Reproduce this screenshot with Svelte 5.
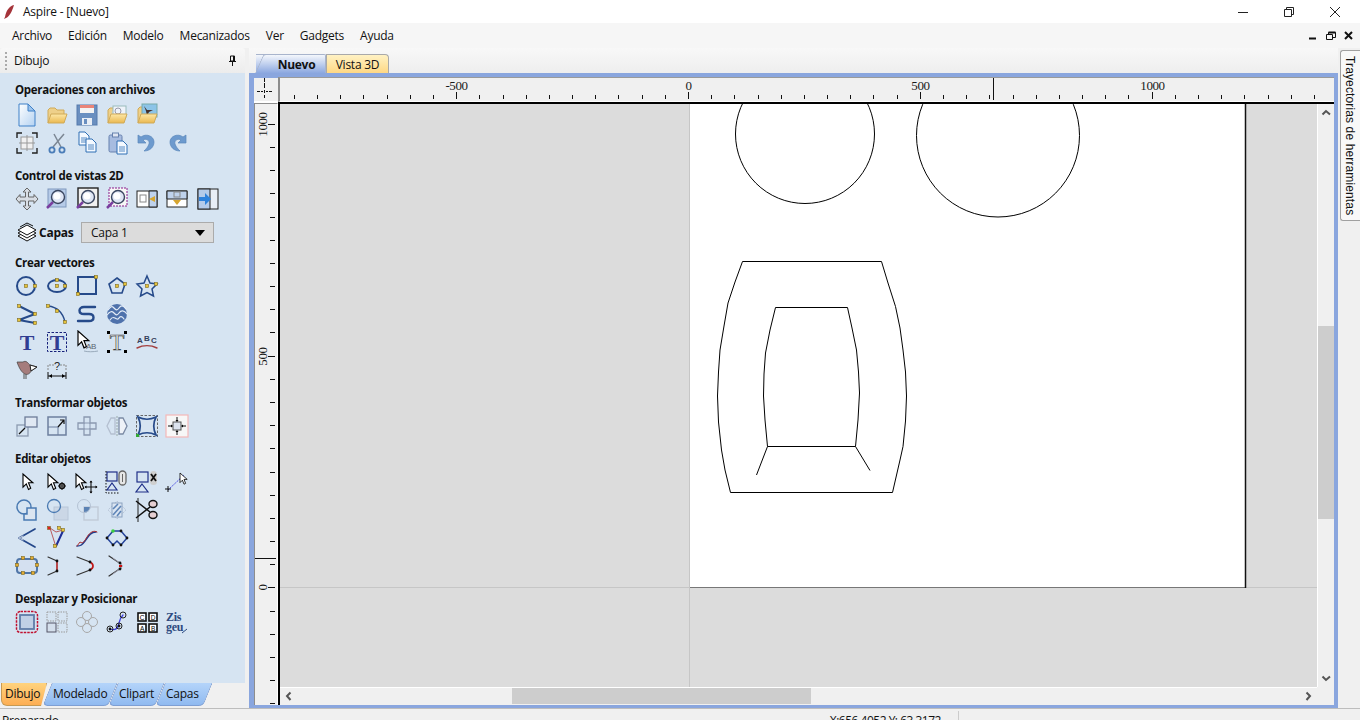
<script>
  const k = (x, y, c = '#e6c33c') => `<rect x="${x - 1.5}" y="${y - 1.5}" width="3" height="3" fill="${c}" stroke="#7d6a20" stroke-width=".6"/>`;
  const d = (x, y) => `<circle cx="${x}" cy="${y}" r="1.4" fill="#111"/>`;
  const blue = '#264a8a';
  const line = (p, c = blue, w = 2) => `<path d="${p}" fill="none" stroke="${c}" stroke-width="${w}" stroke-linejoin="round" stroke-linecap="round"/>`;
  const doc = (x, y, s = 1) => `<g transform="translate(${x} ${y}) scale(${s})"><path d="M0 0h6l4 4v9H0z" fill="#f4f9ff" stroke="#2f6fb4"/><path d="M2 6h6M2 8h6M2 10h6" stroke="#2f6fb4" stroke-width=".8"/></g>`;
  const folder = `<path d="M3 20V7l2-2h5l2 2h7v5" fill="#eed08a" stroke="#d0aa58"/><path d="M3 20l3-9h16l-3 9z" fill="url(#fg)" stroke="#d0aa58"/>`;
  const lens = (x = 13, y = 10, c = '#7a3fa0') => `<path d="M${x - 5} ${y + 5}L${x - 11} ${y + 11}" stroke="${c}" stroke-width="2.5"/><circle cx="${x}" cy="${y}" r="6.5" fill="#dfe6f5" stroke="#3a4660" stroke-width="1.4"/><circle cx="${x - 1}" cy="${y - 1}" r="3.5" fill="#fff"/>`;
  const cur = (x, y, s = 1) => `<path transform="translate(${x} ${y}) scale(${s})" d="M0 0v12l3-3 2 5 2-1-2-5h4z" fill="#fff" stroke="#000"/>`;

  const icons = {
    new: `<path d="M4 1h9l7 7v15H4z" fill="url(#dg)" stroke="#3f80c8"/><path d="M13 1v7h7z" fill="#9cc3ec" stroke="#3f80c8"/>`,
    open: folder,
    save: `<rect x="2" y="2" width="20" height="20" fill="#6a8fc0" stroke="#567aac"/><rect x="5" y="2" width="14" height="8" fill="#f3f3f3"/><rect x="5" y="2" width="14" height="3" fill="#ea8478"/><rect x="7" y="15" width="10" height="7" fill="#e9eef5"/><rect x="9" y="16" width="3" height="5" fill="#6a8fc0"/>`,
    openp: `<path d="M3 20V7l2-2h4" fill="#eed08a" stroke="#d0aa58"/><rect x="8" y="3" width="13" height="11" fill="#eef3fa" stroke="#9bb"/><circle cx="13" cy="8" r="3" fill="none" stroke="#99a"/><path d="M3 20l3-9h16l-3 9z" fill="url(#fg)" stroke="#d0aa58"/>`,
    opens: `<path d="M3 20V6l2-2h4" fill="#eed08a" stroke="#d0aa58"/><rect x="7" y="1" width="15" height="13" fill="#8cc4e8" stroke="#7aa"/><path d="M9 3l3 4h6l-4 2-2 4-1-5z" fill="#43302c"/><path d="M3 20l3-9h16l-3 9z" fill="url(#fg)" stroke="#d0aa58"/>`,
    fit: `<path d="M2 7V2h5M17 2h5v5M22 17v5h-5M7 22H2v-5" fill="none" stroke="#222" stroke-width="1.4"/><rect x="6" y="6" width="12" height="12" fill="#f1f1f1" stroke="#999"/><path d="M12 4v16M4 12h16" stroke="#999"/>`,
    cut: `<path d="M9 3l7 13M19 3L8 16" stroke="#7c8794" stroke-width="1.5"/><circle cx="7" cy="19" r="2.6" fill="none" stroke="#4b7db8" stroke-width="1.8"/><circle cx="17" cy="19" r="2.6" fill="none" stroke="#4b7db8" stroke-width="1.8"/>`,
    copy: doc(4, 1) + doc(11, 8),
    paste: `<rect x="4" y="4" width="13" height="17" rx="1.5" fill="#a7bce0" stroke="#6781ae"/><rect x="7.5" y="2" width="6" height="4" fill="#dfe6f2" stroke="#6781ae"/>` + doc(12, 10),
    undo: `<path d="M6 5v8h8l-3-3c4-2 7 1 6 4-1 3-3 5-5 7 6 0 10-4 10-9 0-6-8-9-13-5z" transform="translate(-3 -1)" fill="#6d9ace" stroke="#5a86ba" stroke-width=".7"/>`,
    redo: `<path d="M18 5v8h-8l3-3c-4-2-7 1-6 4 1 3 3 5 5 7-6 0-10-4-10-9 0-6 8-9 13-5z" transform="translate(3 -1)" fill="#6d9ace" stroke="#5a86ba" stroke-width=".7"/>`,
    move: `<path d="M12 1l4 4h-2.500v5H19V7.500l4 4.500-4 4.500V14h-5.500v5H16l-4 4-4-4h2.500v-5H5v2.500L1 12l4-4.500V10h5.500V5H8z" fill="#d8dde4" stroke="#666"/>`,
    z1: `<rect x="3" y="2" width="18" height="18" fill="#b6cbe8" stroke="#7f98bd"/>` + lens(),
    z2: `<rect x="3" y="1" width="20" height="19" fill="#f0f0f0" stroke="#222" stroke-width="1.4"/>` + lens(),
    z3: `<rect x="4" y="1" width="18" height="18" fill="#f7f7f7" stroke="#8a1a8a" stroke-dasharray="2 1"/>` + lens(),
    z4: `<rect x="2" y="4" width="20" height="16" fill="#fff" stroke="#222"/><path d="M14 4h8v16h-8z" fill="#bfd2ec" stroke="#222"/><rect x="5" y="8" width="6" height="7" fill="none" stroke="#888"/><path d="M14 12l6-3v6z" fill="#d6a530"/>`,
    z5: `<rect x="2" y="4" width="20" height="16" fill="#fff" stroke="#222"/><path d="M2 4h20v8H2z" fill="#bfd2ec" stroke="#222"/><rect x="9" y="5" width="6" height="5" fill="none" stroke="#888"/><path d="M8 13l4 5 4-5z" fill="#d6a530"/>`,
    z6: `<rect x="3" y="2" width="20" height="20" fill="#e8eef6" stroke="#222"/><rect x="3" y="2" width="12" height="20" fill="#b5cbea" stroke="#222"/><path d="M4 10h6V6l6 6-6 6v-4H4z" fill="#2f82dc"/>`,
    circ: `<circle cx="11" cy="12" r="9" fill="none" stroke="${blue}" stroke-width="2"/>` + k(11, 12) + k(20, 12),
    ell: `<ellipse cx="12" cy="12" rx="9" ry="6" fill="none" stroke="${blue}" stroke-width="2"/>` + k(12, 6) + k(12, 12) + k(20, 12),
    rect: `<rect x="3" y="3" width="18" height="17" fill="none" stroke="${blue}" stroke-width="2"/>` + k(3, 20) + k(21, 3),
    poly: `<path d="M12 4l8 6-3 9H7l-3-9z" fill="none" stroke="${blue}" stroke-width="1.6"/>` + k(12, 12) + k(20, 10),
    star: `<path d="M12 2l3 7 7 1-5 5 1.500 7-6.500-3.500L5.500 22 7 15l-5-5 7-1z" fill="none" stroke="${blue}" stroke-width="1.5"/>` + k(12, 12) + k(21, 10),
    pline: line('M4 4l16 8-16 6 16 3') + k(4, 4) + k(20, 12) + k(4, 18) + k(20, 21),
    arc: line('M3 4c9 1 15 7 17 16', blue, 1.4) + k(3, 4) + k(12, 9) + k(20, 20),
    s: line('M20 5H9c-6 0-6 7 0 7h5c6 0 6 7 0 7H3', blue, 2.4),
    wave: `<circle cx="12" cy="12" r="10" fill="#4f72ac"/>` + line('M3 8c3-4 4-4 6-2s3 3 5 0 4-3 7 1M2 13c3-4 5-4 7-2s3 3 5 0 5-3 8 1M5 18c2-3 3-3 5-2s3 2 4 0 3-2 5 1', '#e4edf8', 1.2),
    t1: `<text x="12" y="20" text-anchor="middle" font-family="Liberation Serif" font-weight="700" font-size="22" fill="#303c92">T</text>`,
    t2: `<rect x="2.500" y="2.500" width="19" height="19" fill="none" stroke="#16207a" stroke-dasharray="2.500 1.500"/><text x="12" y="20" text-anchor="middle" font-family="Liberation Serif" font-weight="700" font-size="22" fill="#303c92">T</text>`,
    t3: cur(3, 1, 1.2) + `<text x="11" y="19" font-family="Liberation Sans" font-size="8" fill="#5a6470">AB</text><path d="M9 21c4 1 9 1 14 0" stroke="#9ab" fill="none"/>`,
    t4: `<text x="12" y="20" text-anchor="middle" font-family="Liberation Serif" font-size="24" fill="#e8e8e8" stroke="#333" stroke-width=".6">T</text><rect x="2" y="1" width="3" height="3"/><rect x="19" y="1" width="3" height="3"/><rect x="2" y="20" width="3" height="3"/><rect x="19" y="20" width="3" height="3"/>`,
    t5: `<text x="2" y="13" font-family="Liberation Sans" font-weight="700" font-size="8" fill="#33405a">A</text><text x="9" y="11" font-family="Liberation Sans" font-weight="700" font-size="8" fill="#33405a">B</text><text x="16" y="13" font-family="Liberation Sans" font-weight="700" font-size="8" fill="#33405a">C</text>` + line('M2 18c6-3 14-3 20 0', '#a34040', 1.4),
    bird: `<path d="M2 4l6 0c3-2 5 1 7 3l7 2-6 4c-1 3-4 4-6 3C7 15 4 10 2 4z" fill="#a57c7c" stroke="#444" stroke-width=".7"/><path d="M15 7l7 2-6 4z" fill="#fff" stroke="#222"/><path d="M9 16v5M11 16v5" stroke="#555"/>`,
    dim: `<path d="M3 12V7h6M15 7h6v5" fill="none" stroke="#888" stroke-dasharray="2 1"/><text x="12" y="12" text-anchor="middle" font-family="Liberation Sans" font-size="11" fill="#222">?</text><path d="M3 14v7M21 14v7M3 18h18" stroke="#111"/><path d="M4 18l3-2v4zM20 18l-3-2v4z"/>`,
    tr1: `<rect x="2" y="11" width="11" height="11" fill="none" stroke="#8c9ab0" stroke-width="1.3"/><rect x="10" y="3" width="12" height="10" fill="#e0e8f3" stroke="#6d7c98" stroke-width="1.3"/><path d="M4 20l6-6" stroke="#111" stroke-width="1.2"/>`,
    tr2: `<rect x="3" y="3" width="18" height="18" fill="none" stroke="#6d7f9e" stroke-width="1.5"/><path d="M3 13h10v8" fill="none" stroke="#6d7f9e"/><path d="M13 13l6-7M15 6h4v4" stroke="#111" fill="none" stroke-width="1.2"/>`,
    tr3: `<path d="M9 3h6v6h6v6h-6v6H9v-6H3V9h6z" fill="none" stroke="#8a98b0" stroke-width="1.3"/><path d="M9 9h6v6H9z" fill="none" stroke="#8a98b0"/>`,
    tr4: `<path d="M10 4H6L2 12l4 8h4z" fill="none" stroke="#b4bfd0" stroke-width="1.3"/><path d="M14 4h4l4 8-4 8h-4z" fill="#eef2f8" stroke="#7b8aa4" stroke-width="1.3"/><path d="M12 2v20" stroke="#9aa" stroke-dasharray="2 1"/>`,
    tr5: `<rect x="1.500" y="1.500" width="21" height="21" fill="none" stroke="#666" stroke-dasharray="2.500 1.500"/><path d="M3 3c6 3 12 3 18 0-3 6-3 12 0 18-6-3-12-3-18 0 3-6 3-12 0-18z" fill="none" stroke="${blue}" stroke-width="1.7"/><rect x="1" y="20" width="3" height="3" fill="#3a3"/>`,
    tr6: `<rect x="1" y="1" width="22" height="22" fill="#f7f7f7" stroke="#f4b8b8" stroke-width="1.2"/><rect x="8" y="8" width="8" height="8" fill="#dce3ee" stroke="#555"/><path d="M12 3v4M12 21v-4M3 12h4M21 12h-4" stroke="#111"/><path d="M10.500 6h3L12 8zM10.500 18h3L12 16zM6 10.500v3L8 12zM18 10.500v3L16 12z"/>`,
    e1: cur(8, 4, 1.1),
    e2: cur(3, 4, 1.1) + `<circle cx="17" cy="16" r="2.500" fill="#fff" stroke="#111" stroke-width="1.5"/><path d="M17 12v8M13 16h8" stroke="#111"/>`,
    e3: cur(1, 4, 1.1) + `<path d="M16 11v12M10 17h12" stroke="#111" stroke-width="1.1"/><path d="M14.500 12.500h3L16 10.500zM14.500 21.500h3L16 23.500zM11.500 15.500v3L9.500 17zM20.500 15.500v3L22.500 17z"/>`,
    e4: `<rect x="2" y="2" width="10" height="9" fill="none" stroke="#1f2f88" stroke-width="1.2"/><path d="M7 13l5 7H2z" fill="none" stroke="#1f2f88" stroke-width="1.2"/><path d="M1 1v22h14" fill="none" stroke="#111" stroke-dasharray="1.500 1.500"/><rect x="14" y="1" width="7" height="14" rx="3.500" fill="#e6e6e6" stroke="#666" stroke-width="1.300"/><path d="M17.500 4v8" stroke="#666"/>`,
    e5: `<rect x="2" y="2" width="11" height="10" fill="none" stroke="#1f2f88" stroke-width="1.2"/><path d="M7 14l6 8H1z" fill="none" stroke="#1f2f88" stroke-width="1.2"/><rect x="15" y="1" width="7" height="14" rx="3.500" fill="#cfcfcf"/><path d="M16 4l5 7M21 4l-5 7" stroke="#111" stroke-width="1.800"/>`,
    e6: `<path d="M3 20L19 5" stroke="#3a3ae0" stroke-dasharray="1.500 1"/><path d="M3 16v6M0 19h6" stroke="#111"/>` + cur(15, 3, .8),
    b1: `<circle cx="9" cy="9" r="7" fill="none" stroke="#4a7ab2" stroke-width="1.500"/><path d="M9 16h3V10h9v12H9z" fill="#dbe5f1" stroke="#4a7ab2" stroke-width="1.500"/>`,
    b2: `<rect x="9" y="9" width="14" height="13" fill="#cbd7e6" stroke="#b8c6d8"/><circle cx="9" cy="8" r="6.500" fill="none" stroke="#4a7ab2" stroke-width="1.300"/>`,
    b3: `<rect x="9" y="9" width="14" height="13" fill="none" stroke="#c0cad8" stroke-width="1.400"/><path d="M9 9h6a6 6 0 0 1-6 6z" fill="#5b82b4"/><circle cx="9" cy="8" r="6.500" fill="none" stroke="#b4c2d4"/>`,
    b4: `<path d="M12 3l9 9-9 9-9-9z" fill="none" stroke="#b9c6d8" stroke-dasharray="2 1"/><rect x="7" y="5" width="10" height="14" fill="#dbe5f1" stroke="#8ba2c0"/><path d="M8 11l5-5M8 17l8-9M12 18l4-5" stroke="#5f86b8" stroke-width="1.600"/>`,
    b5: `<path d="M3 0v24" stroke="#222"/><ellipse cx="18" cy="6" rx="4" ry="3.500" fill="#e6cfd2" stroke="#111" stroke-width="1.400"/><ellipse cx="18" cy="17" rx="4" ry="3.500" fill="#e6cfd2" stroke="#111" stroke-width="1.400"/><path d="M1 3l14 11M1 20L15 9" stroke="#111" stroke-width="1.500"/>`,
    n1: line('M20 3L4 12l16 9', '#24478a', 1.7) + line('M8 10l-4 2 4 2', '#b8c4d8', 1.2),
    n2: line('M5 2l6 4 7-2-7 17L5 2', '#aa2020', .7) + line('M18 5l-7 15', '#1e2f98', 2) + k(4, 2, '#e02020') + k(14, 2) + k(18, 4) + k(10, 20),
    n3: line('M2 20c4 0 5-1 8-5s5-9 11-9', '#1f3c8c', 1.5) + line('M2 20l3-4c3 2 4 0 7-5s7-7 10-5', '#b03030', 1),
    n4: `<path d="M2 12L8 5H16L22 12L16 19L12 15L8 19z" fill="none" stroke="#24429a" stroke-width="1.500"/>` + d(2, 12) + d(16, 5) + d(22, 12) + d(16, 19) + d(8, 19) + `<circle cx="8" cy="5" r="1.800" fill="#3cd040"/>`,
    n5: `<rect x="2" y="5" width="20" height="14" rx="3" fill="#d4e0f0" stroke="#5076a8" stroke-width="2"/>` + k(8, 4, '#e4ac32') + k(17, 4, '#e4ac32') + k(22, 11, '#e4ac32') + k(18, 19, '#e4ac32') + k(8, 19, '#e4ac32') + k(2, 11, '#e4ac32'),
    n6: line('M3 3l9 4M3 21l9-4', '#333', 1.2) + line('M12 7v10', '#b02020', 1.6) + d(12, 7) + d(12, 17),
    n7: line('M2 3l13 5M2 21l13-5', '#333', 1.2) + line('M15 8c4 2 4 6 0 8', '#c01818', 1.7) + d(15, 8) + d(15, 16),
    n8: line('M4 2l12 8M4 22l12-8', '#333', 1.2) + line('M8 4l10 8-10 8', '#aab', .8) + d(15, 9) + d(15, 15) + `<rect x="14" y="11" width="3" height="2" fill="#d01010"/>`,
    p1: `<rect x="1.500" y="1.500" width="21" height="21" rx="4" fill="none" stroke="#c01030" stroke-width="1.500" stroke-dasharray="2.500 1"/><rect x="5" y="5" width="14" height="14" fill="#c0d0e6" stroke="#5f7ca8" stroke-width="1.800"/>`,
    p2: `<rect x="2" y="2" width="9" height="9" fill="none" stroke="#9a9a9a" stroke-dasharray="1.500 1"/><rect x="13" y="2" width="9" height="9" fill="none" stroke="#9a9a9a" stroke-dasharray="1.500 1"/><rect x="2" y="13" width="9" height="9" fill="#d4dfec" stroke="#556"/><rect x="13" y="13" width="9" height="9" fill="none" stroke="#9a9a9a" stroke-dasharray="1.500 1"/>`,
    p3: `<circle cx="12" cy="6" r="4.500" fill="none" stroke="#a8a8a8"/><circle cx="12" cy="18" r="4.500" fill="none" stroke="#a8a8a8"/><circle cx="6" cy="12" r="4.500" fill="none" stroke="#a8a8a8"/><circle cx="18" cy="12" r="4.500" fill="none" stroke="#a8a8a8"/>`,
    p4: line('M5 19c6 2 8-1 9-6s2-6 4-8', '#3c3ce0', 1.3) + `<circle cx="5" cy="19" r="3" fill="none" stroke="#222"/><circle cx="14" cy="16" r="3" fill="none" stroke="#222"/><circle cx="18" cy="5" r="3" fill="none" stroke="#222"/>` + d(5, 19) + d(14, 16),
    p5: ['C', 'D', 'A', 'B'].map((l, i) => `<rect x="${i % 2 ? 14 : 3}" y="${i > 1 ? 14 : 3}" width="8" height="8" fill="#fff" stroke="#111" stroke-width="1.600"/><text x="${i % 2 ? 18 : 7}" y="${i > 1 ? 20.500 : 9.500}" text-anchor="middle" font-family="Liberation Sans" font-size="6.500">${l}</text>`).join(''),
    p6: `<g font-family="Liberation Serif" fill="#2e4a80" font-weight="700"><text x="1" y="11" font-size="12">Zis</text><text x="1" y="21" font-size="12">geu</text><path d="M17 23l5-4" stroke="#2e4a80"/></g>`
  };

  const sections = [
    { title: 'Operaciones con archivos', cls: 'first', rows: [['new', 'open', 'save', 'openp', 'opens'], ['fit', 'cut', 'copy', 'paste', 'undo', 'redo']] },
    { title: 'Control de vistas 2D', cls: 'second', rows: [['move', 'z1', 'z2', 'z3', 'z4', 'z5', 'z6']] },
    { capas: true },
    { title: 'Crear vectores', rows: [['circ', 'ell', 'rect', 'poly', 'star'], ['pline', 'arc', 's', 'wave'], ['t1', 't2', 't3', 't4', 't5'], ['bird', 'dim']] },
    { title: 'Transformar objetos', rows: [['tr1', 'tr2', 'tr3', 'tr4', 'tr5', 'tr6']] },
    { title: 'Editar objetos', rows: [['e1', 'e2', 'e3', 'e4', 'e5', 'e6'], ['b1', 'b2', 'b3', 'b4', 'b5'], ['n1', 'n2', 'n3', 'n4'], ['n5', 'n6', 'n7', 'n8']] },
    { title: 'Desplazar y Posicionar', rows: [['p1', 'p2', 'p3', 'p4', 'p5', 'p6']] }
  ];

  const menus = ['Archivo', 'Edición', 'Modelo', 'Mecanizados', 'Ver', 'Gadgets', 'Ayuda'];
  const scale = 0.4636;
  const topTicks = [];
  for (let u = -850; u <= 1400; u += 50) topTicks.push({ u, x: Math.round(688 + u * scale) + 0.5, major: u % 500 === 0 });
  const leftTicks = [];
  for (let u = -250; u <= 1000; u += 50) leftTicks.push({ u, y: Math.round(587.4 - u * scale) + 0.5, major: u % 500 === 0 });
</script>

<svg class="defs" aria-hidden="true">
  <defs>
    <linearGradient id="dg" x1="0" y1="0" x2="1" y2="1"><stop offset="0" stop-color="#ffffff" /><stop offset="1" stop-color="#b4d2f2" /></linearGradient>
    <linearGradient id="fg" x1="0" y1="0" x2="0" y2="1"><stop offset="0" stop-color="#fde8a8" /><stop offset="1" stop-color="#eab850" /></linearGradient>
  </defs>
</svg>

<div class="app">
  <header class="title">
    <svg class="logo" width="12" height="16" viewBox="0 0 12 16"><path d="M11 1C6 2 3 7 2 13l-1 2 2-1c3-1 6-6 8-13z" fill="#a5343a" /></svg>
    <span>Aspire - [Nuevo]</span>
    <div class="winctl">
      <svg width="12" height="12" viewBox="0 0 12 12"><path d="M1 6.500h10" stroke="#222" /></svg>
      <svg width="12" height="12" viewBox="0 0 12 12"><path d="M1.500 3.500h7v7h-7zM3.500 3.500v-2h7v7h-2" fill="none" stroke="#222" /></svg>
      <svg width="12" height="12" viewBox="0 0 12 12"><path d="M1 1l10 10M11 1L1 11" stroke="#222" /></svg>
    </div>
  </header>

  <nav class="menu">
    {#each menus as m}<span>{m}</span>{/each}
    <div class="mdictl">
      <svg width="9" height="9" viewBox="0 0 9 9"><path d="M0 7.500h7" stroke="#111" stroke-width="2" /></svg>
      <svg width="10" height="10" viewBox="0 0 10 10"><path d="M.5 3.500h6v5h-6zM2.500 3V1.500h7v5H7" fill="none" stroke="#111" /><path d="M2.500 1.500h7" stroke="#111" stroke-width="2" /></svg>
      <svg width="9" height="9" viewBox="0 0 9 9"><path d="M1 1l7 7M8 1L1 8" stroke="#111" stroke-width="2" /></svg>
    </div>
  </nav>

  <main class="main">
    <aside class="panel">
      <div class="phead">
        <i class="grip"></i><span>Dibujo</span>
        <svg class="pin" width="9" height="11" viewBox="0 0 9 11"><path d="M2.500 1h4v5h-4zM1 6.500h7M4.500 7v4M5.500 1v5" fill="none" stroke="#111" /></svg>
      </div>
      <div class="pbody">
        {#each sections as s}
          {#if s.capas}
            <div class="capas">
              <svg width="20" height="22" viewBox="0 0 20 22">
                <path d="M1 14l9 5 9-5-9-5z" fill="#fff" stroke="#111" /><path d="M1 11l9 5 9-5-9-5z" fill="#fff" stroke="#111" /><path d="M1 8l9 5 9-5-9-5z" fill="#fff" stroke="#111" />
                <path d="M3 5l7-4 6 3" fill="none" stroke="#111" />
              </svg>
              <b>Capas</b>
              <div class="select"><span>Capa 1</span><i></i></div>
            </div>
          {:else}
            <section class={s.cls}>
              <h3>{s.title}</h3>
              {#each s.rows as row}
                <div class="row">
                  {#each row as name}
                    <svg class="icon" width="24" height="24" viewBox="0 0 24 24">{@html icons[name]}</svg>
                  {/each}
                </div>
              {/each}
            </section>
          {/if}
        {/each}
      </div>
      <div class="ptabs">
        <span class="ptab on">Dibujo</span>
        <span class="ptab m">Modelado</span>
        <span class="ptab c">Clipart</span>
        <span class="ptab a">Capas</span>
      </div>
    </aside>

    <div class="work">
      <div class="doctabs">
        <span class="dtab on">Nuevo</span>
        <span class="dtab">Vista 3D</span>
      </div>
      <div class="frame">
        <div class="corner">
          <svg width="24" height="22" viewBox="0 0 24 22"><path d="M10.500 0v4M10.500 5v5M10.500 12v3M10.500 17v3M3 13.500h3M7 13.500h2M12 13.500h2M15 13.500h3M10 13.500h1" stroke="#111" /></svg>
        </div>
        <div class="rtop">
          <svg width="1054" height="24" viewBox="280 78 1054 24">
            {#each topTicks as t}
              <path d="M{t.x} {t.major ? 92 : 95}V99" stroke="#111" />
              {#if t.major}<text x={t.x} y="90" text-anchor="middle">{t.u}</text>{/if}
            {/each}
            <path d="M993.500 78V100" stroke="#111" />
          </svg>
        </div>
        <div class="rleft">
          <svg width="23" height="601" viewBox="254 104 23 601">
            {#each leftTicks as t}
              <path d="M{t.major ? 268 : 270} {t.y}H275" stroke="#111" />
              {#if t.major}<text transform="translate(267 {t.y}) rotate(-90)" text-anchor="middle">{t.u}</text>{/if}
            {/each}
            <path d="M254 558.500H276" stroke="#111" />
          </svg>
        </div>
        <div class="view">
          <div class="stage">
            <svg width="1037" height="583" viewBox="280 104 1037 583">
              <rect x="690" y="104" width="556" height="483" fill="#fff" />
              <path d="M280 587.500H1317M689.500 104V687" stroke="#c6c6c6" />
              <path d="M690 587.500H1246" stroke="#777" />
              <path d="M1245.500 104V588" stroke="#111" stroke-width="1.500" />
              <g fill="none" stroke="#000">
                <circle cx="805" cy="134" r="69.500" />
                <circle cx="998" cy="135.500" r="81.500" />
                <path d="M742.500 261.500H881.500L888 283L895.500 306.500L900 328L903 350L905.500 372L906.500 396L905.500 421L903 446.500L900 460L892.500 492.500H730.500L725 470L721.500 450L718.500 422L717.500 396L718.500 372L720 350L724 326L728 303L735 282z" />
                <path d="M775.500 307.500H847.500L852 328L856.500 350L858.500 372L859.500 393L858 420L855.500 446.500H767.500L765 420L763.500 396L764 374L765.500 353L770 330z" />
                <path d="M767.500 446.500L756.500 475M855.500 446.500L870 470.500" />
              </g>
            </svg>
          </div>
          <div class="vbar">
            <svg width="17" height="17" viewBox="0 0 17 17"><path d="M4.500 10.500L8 7l4 3.500" fill="none" stroke="#555" stroke-width="2" /></svg>
            <div class="track"><i class="vthumb"></i></div>
            <svg width="17" height="17" viewBox="0 0 17 17"><path d="M4.500 6.500L8 10l4-3.500" fill="none" stroke="#555" stroke-width="2" /></svg>
          </div>
          <div class="hbar">
            <svg width="17" height="17" viewBox="0 0 17 17"><path d="M10.500 4.500L7 8l3.500 4" fill="none" stroke="#555" stroke-width="2" /></svg>
            <div class="track"><i class="hthumb"></i></div>
            <svg width="17" height="17" viewBox="0 0 17 17"><path d="M6.500 4.500L10 8l-3.500 4" fill="none" stroke="#555" stroke-width="2" /></svg>
          </div>
          <div class="cornerbox"></div>
        </div>
      </div>
    </div>

    <div class="side"><span class="vtab">Trayectorias de herramientas</span></div>
  </main>

  <footer class="status">
    <span class="ready">Preparado</span>
    <span class="coord">X:656.4052 Y: 63.3172</span>
    <i class="sep"></i>
  </footer>
</div>

<style>
  :global(body) { margin: 0; background: #f0f0f0; }
  .defs { position: absolute; width: 0; height: 0; }
  .app {
    width: 1360px; height: 720px; overflow: hidden;
    display: grid; grid-template-rows: 23px 25px 660px 12px;
    font: 12px "Open Sans", "Noto Sans", sans-serif; letter-spacing: -.25px; color: #111;
  }
  .title { background: #fff; display: flex; align-items: center; padding-left: 3px; gap: 8px; }
  .logo { flex: none; }
  .winctl { margin-left: auto; display: flex; gap: 34px; padding-right: 19px; align-items: center; }
  .menu { background: #f6f6f6; display: flex; align-items: center; padding-left: 12px; gap: 16px; }
  .mdictl { margin-left: auto; display: flex; gap: 8px; padding-right: 7px; align-items: center; }

  .main { display: grid; grid-template-columns: 249px 1089px 22px; background: #f0f0f0; min-height: 0; }
  .panel { display: grid; grid-template-rows: 25px 610px 25px; width: 245px; }
  .phead {
    display: flex; align-items: center; padding: 0 8px 0 5px; gap: 7px;
    background: linear-gradient(#f8f8f8, #ececec); border-radius: 3px 3px 0 0;
  }
  .grip { width: 2px; height: 18px; background: repeating-linear-gradient(#aaa 0 2px, transparent 2px 4px); }
  .pin { margin-left: auto; }
  .pbody { background: #d6e4f2; padding: 8px 0 0 15px; display: flex; flex-direction: column; gap: 11px; }
  h3 { margin: 0 0 1px; height: 16px; font-size: 11.500px; line-height: 16px; font-weight: 700; letter-spacing: -.3px; }
  .first h3 { margin-bottom: 4px; line-height: 18px; }
  .second { margin-top: -1px; }
  .second h3 { margin-bottom: 2px; line-height: 18px; }
  .row { display: flex; gap: 6px; height: 28px; align-items: center; }
  .icon { flex: none; display: block; }
  .capas { display: flex; align-items: center; height: 21px; gap: 2px; margin: -2px 0 1px 2px; }
  .capas b { font-weight: 700; width: 40px; }
  .select {
    width: 114px; height: 19px; background: #dcdcdc; border: 1px solid #ababab;
    display: flex; align-items: center; justify-content: space-between; padding: 0 8px 0 9px;
  }
  .select i { width: 0; height: 0; border: 5.500px solid transparent; border-top: 6px solid #000; border-bottom: 0; }

  .ptabs { display: flex; align-items: flex-start; position: relative; padding-left: 1px; }
  .ptab { position: relative; height: 23px; line-height: 22px; z-index: 0; padding-left: 6px; box-sizing: border-box; }
  .ptab::before {
    content: ""; position: absolute; inset: 0; z-index: -1; transform: skewX(-22deg);
    background: linear-gradient(#b4d4fa, #90baf0); border: 1px solid #7e9fd4; border-top: 0; border-radius: 0 0 5px 5px;
  }
  .ptab.on { width: 46px; z-index: 4; padding-left: 4px; }
  .ptab.on::before { transform: none; background: linear-gradient(#ffd37e, #fdae54); border-color: #c79a52; border-radius: 0 0 6px 6px; clip-path: polygon(0 0, 100% 0, 87% 100%, 0 100%); }
  .ptab.m { width: 66px; z-index: 3; }
  .ptab.c { width: 47px; z-index: 2; }
  .ptab.a { width: 48px; z-index: 1; }

  .work { display: grid; grid-template-rows: 25px 635px; min-width: 0; }
  .doctabs { display: flex; align-items: flex-end; padding-left: 7px; background: linear-gradient(#f8f8f8, #eee); }
  .dtab {
    position: relative; height: 19px; line-height: 20px; width: 63px; box-sizing: border-box; text-align: center;
    background: linear-gradient(#fff2c4, #ffd884); border: 1px solid #a9a9a9; border-bottom: 0; border-radius: 0 4px 0 0;
  }
  .dtab.on {
    width: 70px; font-weight: 700; border-color: #a8b4cc; background: linear-gradient(#f4f7fc, #8ca8e0); z-index: 1;
    padding-left: 12px; border-left: 0; border-radius: 0 2px 0 0;
  }
  .dtab.on::before {
    content: ""; position: absolute; left: -1px; top: -1px; bottom: 0; width: 12px; z-index: -1;
    transform: skewX(-24deg); transform-origin: bottom left;
    background: linear-gradient(#f4f7fc, #8ca8e0); border-left: 1px solid #a8b4cc; border-top: 1px solid #a8b4cc; border-radius: 3px 0 0 0;
  }
  .frame {
    background: #8aa6de; padding: 4px 4px 3px 5px; box-sizing: border-box;
    display: grid; grid-template-columns: 24px 1056px; grid-template-rows: 26px 602px;
  }
  .corner { background: #f0f0f0; height: 23px; width: 24px; margin-top: 1px; border-bottom: 2px solid #fff; }
  .corner svg { display: block; }
  .rtop {
    background: #f0f0f0; height: 23px; border-top: 1px solid #9a9a9a; border-left: 2px solid #8d8d8d;
    overflow: hidden; box-sizing: content-box; border-bottom: 2px solid #fff; width: 1054px;
  }
  .rtop svg { display: block; }
  .rleft {
    background: #f0f0f0; overflow: hidden; box-sizing: border-box; width: 24px;
    border-left: 1px solid #8d8d8d; border-top: 1px solid #8d8d8d; border-right: 1px solid #fff;
  }
  .rleft svg { display: block; margin-left: -1px; }
  svg text { font: 13px "Liberation Serif", serif; letter-spacing: -.4px; fill: #1a1a1a; }
  .view {
    border-left: 2px solid #000; border-top: 2px solid #000; background: #f0f0f0; min-height: 0; margin-top: -1px;
    display: grid; grid-template-columns: 1037px 17px; grid-template-rows: 583px 17px;
  }
  .stage { background: #dcdcdc; overflow: hidden; }
  .stage svg { display: block; }
  .vbar, .hbar { background: #f0f0f0; display: flex; }
  .vbar { flex-direction: column; border-left: 1px solid #fff; }
  .hbar { border-top: 1px solid #fff; }
  .track { flex: 1; position: relative; display: flex; }
  .vbar .track { flex-direction: column; padding-top: 205px; }
  .hbar .track { padding-left: 215px; }
  .vthumb { width: 16px; height: 193px; background: #cdcdcd; }
  .hthumb { width: 299px; height: 16px; background: #cdcdcd; }
  .cornerbox { background: #f0f0f0; }

  .side { padding: 2px 0 0 2px; }
  .vtab {
    display: block; writing-mode: vertical-rl; font: 12px "Liberation Sans", sans-serif; letter-spacing: .13px;
    height: 171px; box-sizing: border-box; padding-top: 5px; width: 20px; line-height: 20px;
    background: #f8f8f8; border: 1px solid #a0a0a0; border-right: 0; border-radius: 3px 0 0 3px;
  }

  .status {
    border-top: 1px solid #bdbdbd; background: #f0f0f0; position: relative; overflow: hidden;
    display: flex; padding: 4px 0 0 2px; line-height: 16px;
  }
  .coord { margin-left: 771px; width: 128px; letter-spacing: -.5px; }
  .sep { width: 1px; height: 12px; background: #ccc; margin-top: -2px; }
</style>
